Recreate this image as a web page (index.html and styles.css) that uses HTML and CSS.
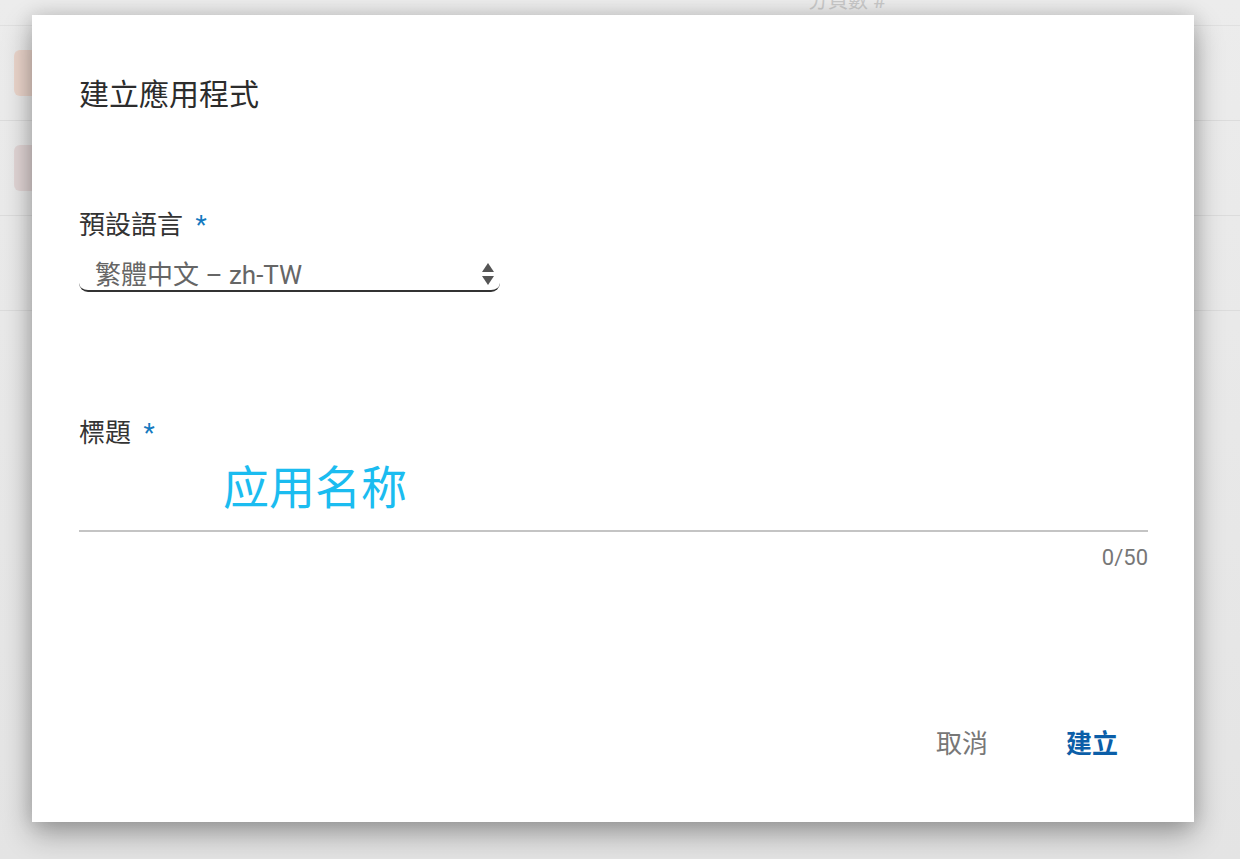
FILE: index.html
```html
<!DOCTYPE html>

<html>
    <head>
        <meta charset="utf-8">

        <link rel="stylesheet" href="styles.css">
    </head>

    <body>
        <div class="backdrop">
            <div class="topbar">
                <span class="topbar-text">分頁數 #</span>
            </div>

            <div class="row">
                <div class="thumb thumb-orange"></div>
            </div>

            <div class="row">
                <div class="thumb thumb-pink"></div>
            </div>

            <div class="row"></div>
        </div>

        <div class="dialog">
            <div class="title">
                建立應用程式
            </div>

            <div class="label label-first">
                預設語言 <span class="star">*</span>
            </div>

            <div class="select">
                <span class="select-text">繁體中文 – zh-TW</span>

                <svg class="arrows" width="12" height="23" viewBox="0 0 12 23">
                    <path d="M6 0 L12 9 L0 9 Z" fill="#555"/>
                    <path d="M0 13 L12 13 L6 22 Z" fill="#555"/>
                </svg>
            </div>

            <div class="label label-second">
                標題 <span class="star">*</span>
            </div>

            <div class="input">
                <span class="placeholder">应用名称</span>
            </div>

            <div class="counter">
                0/50
            </div>

            <div class="actions">
                <button class="btn btn-cancel">取消</button>

                <button class="btn btn-ok">建立</button>
            </div>
        </div>
    </body>
</html>
```

FILE: styles.css
```css
body
{
    margin: 0;
    height: 859px;
    overflow: hidden;
    background-color: #e6e6e6;
    font-family: Roboto, "Noto Sans CJK TC", sans-serif;
}

.backdrop
{
    height: 859px;
    background: linear-gradient(#ececec, #e4e4e4);
}

.topbar
{
    height: 25px;
    border-bottom: 1px solid #e0e0e0;
    position: relative;
}

.topbar-text
{
    position: absolute;
    left: 808px;
    top: -9px;
    font-size: 20px;
    line-height: 20px;
    color: #c9c9c9;
}

.row
{
    height: 94px;
    border-bottom: 1px solid #dcdcdc;
    display: flex;
    align-items: center;
    padding-left: 14px;
}

.thumb
{
    width: 40px;
    height: 46px;
    border-radius: 6px;
}

.thumb-orange
{
    background-color: #ecd6cc;
}

.thumb-pink
{
    background-color: #e2d6d6;
}

.dialog
{
    position: absolute;
    left: 32px;
    top: 15px;
    width: 1162px;
    height: 807px;
    box-sizing: border-box;
    padding: 60px 46px 0 47px;
    background-color: white;
    box-shadow: 0 12px 28px rgba(0, 0, 0, 0.32), 0 0 18px rgba(0, 0, 0, 0.12);
    display: flex;
    flex-direction: column;
}

.title
{
    font-size: 30px;
    line-height: 40px;
    color: #2c2c2c;
}

.label
{
    font-size: 26px;
    line-height: 36px;
    color: #333;
}

.label-first
{
    margin-top: 92px;
}

.label-second
{
    margin-top: 123px;
}

.star
{
    color: #1479bf;
    margin-left: 6px;
}

.select
{
    width: 421px;
    height: 36px;
    box-sizing: border-box;
    margin-top: 13px;
    padding: 3px 6px 0 16px;
    border-bottom: 2px solid #333;
    border-radius: 0 0 9px 9px;
    display: flex;
    align-items: center;
    justify-content: space-between;
}

.select-text
{
    font-size: 26px;
    line-height: 34px;
    color: #666;
}

.arrows
{
    display: block;
}

.input
{
    height: 81px;
    box-sizing: border-box;
    padding: 3px 0 0 144px;
    border-bottom: 2px solid #c4c4c4;
    display: flex;
    align-items: flex-start;
}

.placeholder
{
    font-family: "Noto Sans CJK SC", sans-serif;
    font-size: 46px;
    line-height: 60px;
    color: #1bbcf0;
}

.counter
{
    margin-top: 11px;
    text-align: right;
    font-size: 22px;
    line-height: 30px;
    color: #777;
}

.actions
{
    margin-top: 153px;
    display: flex;
    justify-content: flex-end;
    padding-right: 30px;
}

.btn
{
    border: none;
    background: none;
    padding: 0;
    font-family: Roboto, "Noto Sans CJK TC", sans-serif;
    font-size: 26px;
    line-height: 36px;
    cursor: pointer;
}

.btn-cancel
{
    color: #777;
}

.btn-ok
{
    margin-left: 78px;
    color: #0b5ea8;
    font-weight: bold;
}
```
